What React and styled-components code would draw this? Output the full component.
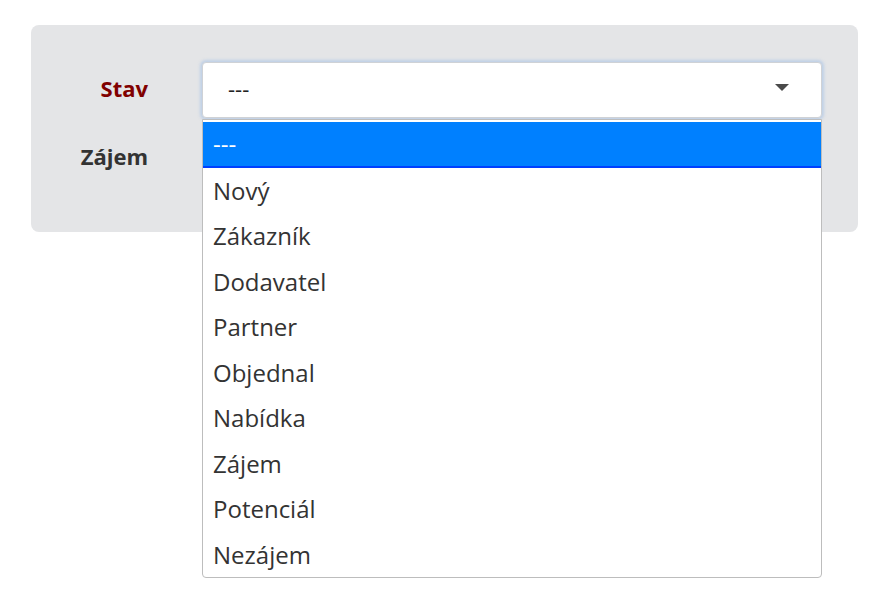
import styled, { createGlobalStyle } from "styled-components";

const GlobalStyle = createGlobalStyle`
    body {
        margin: 0;
        min-height: 610px;
        background: #ffffff;
        font-family: "Open Sans", "DejaVu Sans", sans-serif;
    }
    #root {
        min-height: 610px;
    }
`;

const Panel = styled.div`
    margin: 25px 0 0 31px;
    width: 827px;
    box-sizing: border-box;
    padding: 37px 36px 46px 0;
    background: #e4e5e7;
    border-radius: 8px;
    display: grid;
    grid-template-columns: 117px 1fr;
    column-gap: 54px;
    row-gap: 12px;
    align-items: center;
`;

const Label = styled.label`
    text-align: right;
    font-size: 22px;
    line-height: 1;
    padding-bottom: 4px;
    font-weight: 700;
    color: ${(p) => (p.$required ? "#800000" : "#333333")};
`;

const SelectBox = styled.div`
    position: relative;
    height: 56px;
    box-sizing: border-box;
    background: #ffffff;
    border: 1px solid #cfd2d6;
    border-radius: 4px;
    box-shadow: ${(p) => (p.$focused ? "0 0 3px 2px rgba(120, 170, 230, 0.35)" : "none")};
    display: flex;
    align-items: center;
    padding: 0 0 4px 25px;
    font-size: 22px;
    color: #222222;
`;

const Caret = styled.svg`
    position: absolute;
    right: 32px;
    top: 21px;
`;

const Menu = styled.ul`
    position: absolute;
    top: 56px;
    left: -1px;
    right: -1px;
    margin: 0;
    padding: 2px 0 0;
    list-style: none;
    background: #ffffff;
    border: 1px solid #bdbdbd;
    border-radius: 0 0 4px 4px;
    z-index: 10;
`;

const Option = styled.li`
    height: 45.5px;
    box-sizing: border-box;
    display: flex;
    align-items: center;
    padding: 0 10px;
    font-size: 24px;
    color: ${(p) => (p.$active ? "#ffffff" : "#333333")};
    background: ${(p) => (p.$active ? "#0080ff" : "transparent")};
    border-bottom: ${(p) => (p.$active ? "2px solid #0040ff" : "none")};
`;

const options = [
    "---",
    "Nový",
    "Zákazník",
    "Dodavatel",
    "Partner",
    "Objednal",
    "Nabídka",
    "Zájem",
    "Potenciál",
    "Nezájem",
];

const App = () => {
    return (
        <>
            <GlobalStyle />
            <Panel>
                <Label $required>Stav</Label>
                <SelectBox $focused>
                    ---
                    <Caret width="14" height="8" viewBox="0 0 14 8">
                        <path d="M0 0 L14 0 L7 7 Z" fill="#4a4a4a" />
                    </Caret>
                    <Menu>
                        {options.map((o, i) => (
                            <Option key={o} $active={i === 0}>
                                {o}
                            </Option>
                        ))}
                    </Menu>
                </SelectBox>
                <Label>Zájem</Label>
                <SelectBox>---</SelectBox>
            </Panel>
        </>
    );
};

export default App;
